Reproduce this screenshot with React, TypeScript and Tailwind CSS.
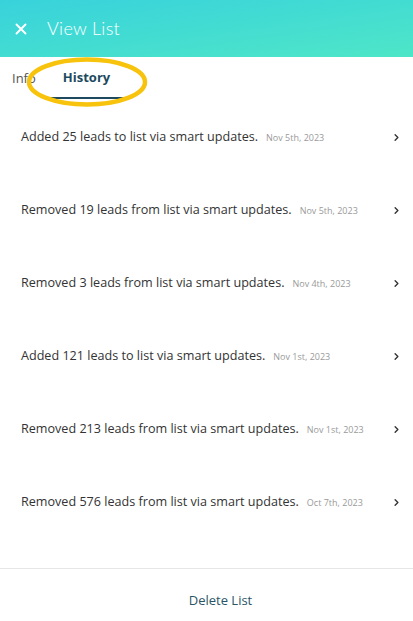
import { X, ChevronRight } from "lucide-react";

const items = [
    { text: "Added 25 leads to list via smart updates.", date: "Nov 5th, 2023" },
    { text: "Removed 19 leads from list via smart updates.", date: "Nov 5th, 2023" },
    { text: "Removed 3 leads from list via smart updates.", date: "Nov 4th, 2023" },
    { text: "Added 121 leads to list via smart updates.", date: "Nov 1st, 2023" },
    { text: "Removed 213 leads from list via smart updates.", date: "Nov 1st, 2023" },
    { text: "Removed 576 leads from list via smart updates.", date: "Oct 7th, 2023" },
];

const App = () => {
    return (
        <div className="relative flex flex-col w-[413px] h-[621px] bg-white overflow-hidden font-['Open_Sans',sans-serif]">
            <div className="flex flex-row items-center h-[57px] pl-[12px] gap-[17px] bg-gradient-to-br from-[#38d2dc] to-[#4ee6c7]">
                <X className="text-white" size={18} strokeWidth={2.5} />
                <span className="text-white text-[18px] font-light font-['Lato',sans-serif] tracking-[0.3px]">View List</span>
            </div>

            <div className="flex flex-row h-[42px] items-stretch">
                <div className="flex items-center pl-[12px] pr-[14px] pt-[2px] text-[13px] text-[#555]">Info</div>
                <div className="relative flex items-center pl-[13px] pr-[14px] pt-[2px] text-[13px] font-bold text-[#1d4a5e] border-b-2 border-[#1d4a5e]">
                    History
                </div>
            </div>

            <div className="flex flex-col mt-[2px]">
                {items.map((item, i) => (
                    <div key={i} className="flex flex-row items-center h-[73px] pl-[21px] pr-[11px]">
                        <span className="text-[12.6px] text-[#333]">{item.text}</span>
                        <span className="ml-[8px] text-[9px] text-[#9a9a9a]">{item.date}</span>
                        <ChevronRight className="ml-auto text-[#333]" size={11} strokeWidth={3} />
                    </div>
                ))}
            </div>

            <div className="mt-auto flex items-center justify-center h-[53px] border-t border-[#e6e6e6] pl-[28px] pt-[12px] text-[13px] text-[#2b5566]">
                Delete List
            </div>

            <svg className="absolute left-[24px] top-[55px]" width="126" height="54" viewBox="0 0 126 54">
                <ellipse cx="63" cy="27" rx="58" ry="22.5" fill="none" stroke="#f8c30c" strokeWidth="4.5" />
            </svg>
        </div>
    );
};

export default App;
